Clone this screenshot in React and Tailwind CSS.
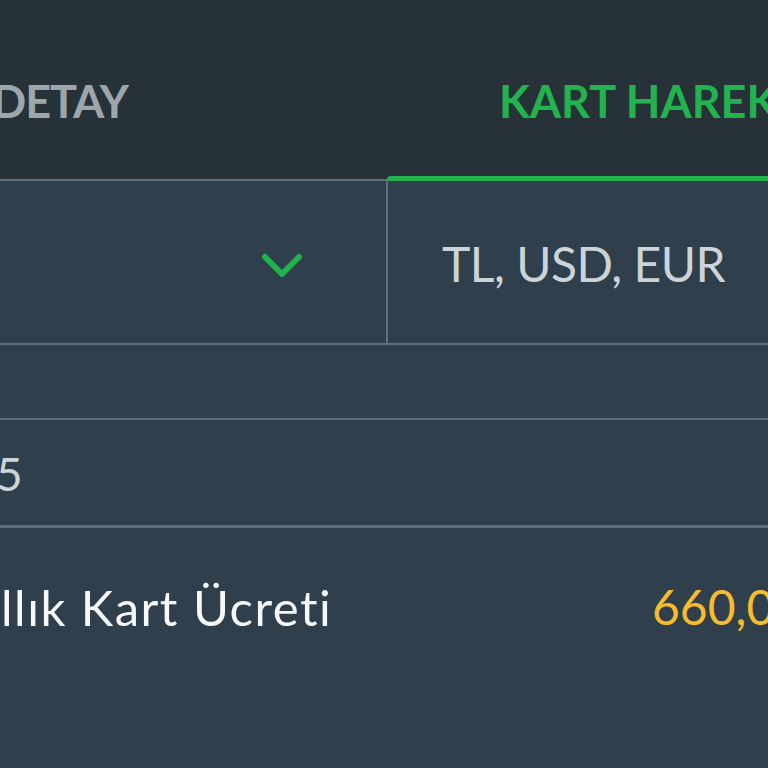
import React from 'react';

const App = () => {
    return (
        <div className="w-[768px] h-[768px] overflow-hidden bg-[#2f3f4b]" style={{ fontFamily: 'Lato, "Open Sans", sans-serif' }}>
            {/* tabs */}
            <div className="flex h-[181px] bg-[#263238]">
                <div className="w-[387px] flex flex-col overflow-hidden">
                    <div className="flex-1 pt-[79px]">
                        <span className="block -ml-[8px] text-[45px] leading-none font-bold text-[#9ea6ad] tracking-[-1px] whitespace-nowrap">DETAY</span>
                    </div>
                    <div className="h-[2px] bg-[#5e6e7a]" />
                </div>
                <div className="flex-1 flex flex-col overflow-hidden">
                    <div className="flex-1 pt-[79px] pl-[112px]">
                        <span className="block text-[45px] leading-none font-bold text-[#22b24e] tracking-[0px] whitespace-nowrap">KART HAREKETLERİ</span>
                    </div>
                    <div className="h-[5px] bg-[#22b24e] rounded-tl-[4px]" />
                </div>
            </div>

            {/* filter row */}
            <div className="flex h-[164px] border-b-2 border-[#5e6e7a]">
                <div className="w-[388px] border-r-2 border-[#5e6e7a] flex items-center justify-end pr-[83px]">
                    <svg width="42" height="28" viewBox="0 0 42 28" fill="none" className="mt-[8px]">
                        <path d="M4 5 L21 22 L38 5" stroke="#22b24e" strokeWidth="6" strokeLinecap="round" strokeLinejoin="round" />
                    </svg>
                </div>
                <div className="flex-1 flex items-center pl-[54px]">
                    <span className="block mt-[4px] text-[48px] leading-none text-[#ccd3d9] tracking-[-0.5px] whitespace-nowrap">TL, USD, EUR</span>
                </div>
            </div>

            {/* empty row */}
            <div className="h-[75px] border-b-2 border-[#5e6e7a]" />

            {/* value row */}
            <div className="h-[108px] border-b-[3px] border-[#5e6e7a] flex items-center">
                <span className="block -ml-[4px] mt-[2px] text-[46px] leading-none text-[#ccd3d9]">5</span>
            </div>

            {/* fee row */}
            <div className="h-[158px] flex items-center justify-between overflow-hidden">
                <span className="block pl-[1px] text-[49px] leading-none text-[#f6f8f9] tracking-[1.5px] whitespace-nowrap">llık Kart Ücreti</span>
                <span className="block shrink-0 w-[116px] overflow-hidden text-[48px] leading-none text-[#f7bc2e] whitespace-nowrap">660,00 TL</span>
            </div>
        </div>
    );
};

export default App;
